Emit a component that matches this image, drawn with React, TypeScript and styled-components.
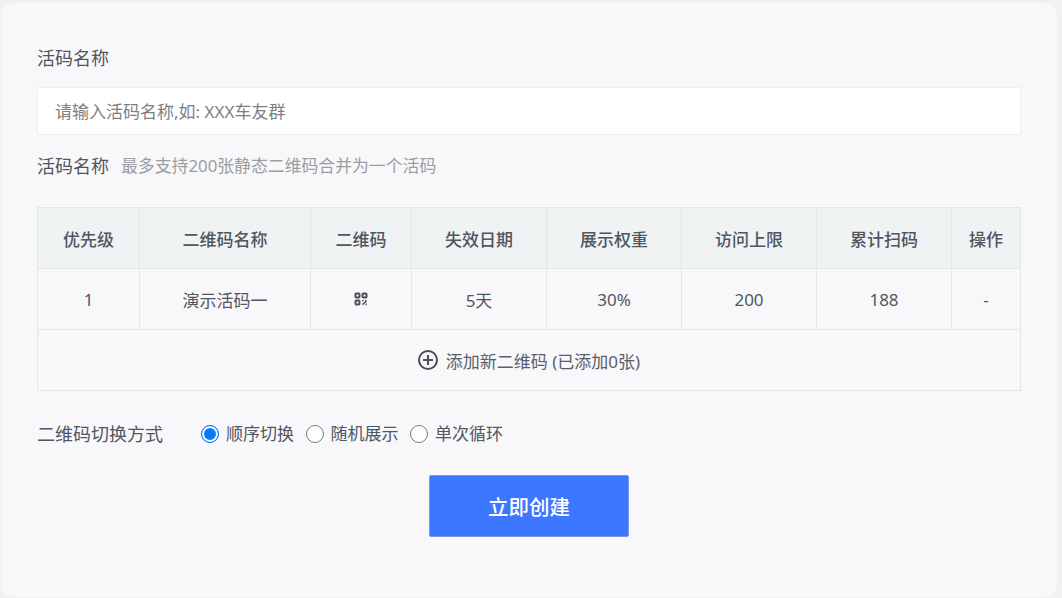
import React from "react";
import styled, { createGlobalStyle } from "styled-components";

const Global = createGlobalStyle`
  html, body { margin: 0; padding: 0; background: #f1f1f3; }
  body { font-family: "Noto Sans", "Noto Sans CJK SC", sans-serif; color: #4d5560; }
  * { box-sizing: border-box; }
`;

const Card = styled.main`
  width: 1056px;
  height: 594px;
  margin: 3px 0 0 1px;
  padding: 43px 36px 0;
  background: #f8f8fa;
  border-radius: 12px;
`;

const Label = styled.div`
  font-size: 18px;
  line-height: 24px;
  color: #50565f;
`;

const NameInput = styled.input`
  display: block;
  width: 984px;
  height: 48px;
  margin-top: 17px;
  padding: 0 17px;
  font: inherit;
  font-size: 17px;
  background: #fff;
  border: 1px solid #eceef2;
  border-radius: 2px;
  outline: none;
  &::placeholder { color: #7d7f83; opacity: 1; }
`;

const HintRow = styled.div`
  display: flex;
  align-items: center;
  gap: 12px;
  margin-top: 19px;
`;

const Hint = styled.span`
  font-size: 16.85px;
  line-height: 24px;
  color: #9b9da1;
`;

const Table = styled.table`
  width: 984px;
  margin-top: 29px;
  table-layout: fixed;
  border-collapse: collapse;
  font-size: 17px;
  color: #50565f;
`;

const HeadCell = styled.th`
  height: 61px;
  padding: 0;
  font-weight: 500;
  text-align: center;
  background: #eff3f4;
  border: 1px solid #e4e6e8;
`;

const Cell = styled.td`
  height: 61px;
  padding: 0;
  text-align: center;
  border: 1px solid #e4e6e8;
`;

const AddContent = styled.div`
  display: flex;
  align-items: center;
  justify-content: center;
  gap: 8px;
  color: #5a6068;
`;

const RadioRow = styled.div`
  display: flex;
  align-items: center;
  margin-top: 31px;
`;

const RadioLabel = styled(Label)`
  width: 164px;
`;

const Option = styled.label`
  display: flex;
  align-items: center;
  gap: 7px;
  margin-right: 11.5px;
  font-size: 17px;
  line-height: 24px;
  color: #50565f;
`;

const RadioMark = styled.span<{ $on?: boolean }>`
  width: 18px;
  height: 18px;
  border-radius: 50%;
  background: ${(p) => (p.$on ? "#0a7af5" : "#fff")};
  border: ${(p) => (p.$on ? "1.5px solid #0a7af5" : "1.5px solid #77797c")};
  box-shadow: ${(p) => (p.$on ? "inset 0 0 0 2px #fff" : "none")};
`;

const Actions = styled.div`
  display: flex;
  justify-content: center;
  margin-top: 29px;
`;

const Submit = styled.button`
  width: 200px;
  height: 62px;
  font: inherit;
  font-size: 20.5px;
  font-weight: 500;
  color: #fff;
  background: #3d77ff;
  border: 1px solid #6f9af2;
  border-radius: 2px;
`;

const QrIcon = styled.svg`
  display: block;
  margin: 0 auto;
`;

const cols = [102, 171, 101, 135, 135, 135, 135, 69];
const heads = ["优先级", "二维码名称", "二维码", "失效日期", "展示权重", "访问上限", "累计扫码", "操作"];
const options = ["顺序切换", "随机展示", "单次循环"];

export default function App() {
  return (
    <Card>
      <Global />
      <Label>活码名称</Label>
      <NameInput placeholder="请输入活码名称,如: XXX车友群" />
      <HintRow>
        <Label>活码名称</Label>
        <Hint>最多支持200张静态二维码合并为一个活码</Hint>
      </HintRow>
      <Table>
        <colgroup>
          {cols.map((w, i) => (
            <col key={i} style={{ width: w }} />
          ))}
        </colgroup>
        <thead>
          <tr>
            {heads.map((h) => (
              <HeadCell key={h}>{h}</HeadCell>
            ))}
          </tr>
        </thead>
        <tbody>
          <tr>
            <Cell>1</Cell>
            <Cell>演示活码一</Cell>
            <Cell>
              <QrIcon width="14" height="14" viewBox="0 0 14 14" fill="none" stroke="#4a4e57" strokeWidth="2">
                <rect x="1.5" y="1.5" width="4" height="4" rx="0.8" />
                <rect x="8.5" y="1.5" width="4" height="4" rx="0.8" />
                <rect x="1.5" y="8.5" width="4" height="4" rx="0.8" />
                <path d="M8 8.6h1.6M11.6 8v1.6M8.6 12.6l4-3.6M8 12.2h1.4M12 11.6v1.6" strokeWidth="1.3" />
              </QrIcon>
            </Cell>
            <Cell>5天</Cell>
            <Cell>30%</Cell>
            <Cell>200</Cell>
            <Cell>188</Cell>
            <Cell>-</Cell>
          </tr>
          <tr>
            <Cell colSpan={8}>
              <AddContent>
                <svg width="20" height="20" viewBox="0 0 20 20" fill="none" stroke="#4a4e57" strokeWidth="2">
                  <circle cx="10" cy="10" r="9" />
                  <path d="M10 5v10M5 10h10" />
                </svg>
                添加新二维码 (已添加0张)
              </AddContent>
            </Cell>
          </tr>
        </tbody>
      </Table>
      <RadioRow>
        <RadioLabel>二维码切换方式</RadioLabel>
        {options.map((o, i) => (
          <Option key={o}>
            <RadioMark $on={i === 0} />
            {o}
          </Option>
        ))}
      </RadioRow>
      <Actions>
        <Submit>立即创建</Submit>
      </Actions>
    </Card>
  );
}
